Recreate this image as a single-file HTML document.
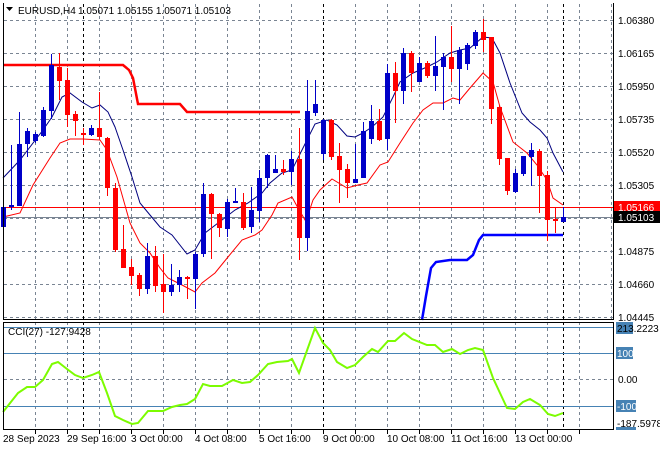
<!DOCTYPE html>
<html><head><meta charset="utf-8"><style>
html,body{margin:0;padding:0;background:#fff;}
svg{display:block;font-family:"Liberation Sans",sans-serif;font-size:10px;}
</style></head><body>
<svg width="660" height="450" viewBox="0 0 660 450" xmlns="http://www.w3.org/2000/svg" shape-rendering="crispEdges">
<rect width="660" height="450" fill="#fff"/>
<g stroke="#7a8593" stroke-width="1" stroke-dasharray="3,3" fill="none">
<path d="M4 20.5H613M4 53.5H613M4 86.5H613M4 119.5H613M4 152.5H613M4 185.5H613M4 218.5H613M4 251.5H613M4 284.5H613M4 317.5H613"/>
<path d="M35.5 4V319M67.5 4V319M99.5 4V319M131.5 4V319M163.5 4V319M195.5 4V319M227.5 4V319M259.5 4V319M291.5 4V319M355.5 4V319M387.5 4V319M419.5 4V319M451.5 4V319M483.5 4V319M515.5 4V319M547.5 4V319M579.5 4V319M611.5 4V319"/>
<path d="M35.5 322V429M67.5 322V429M99.5 322V429M131.5 322V429M163.5 322V429M195.5 322V429M227.5 322V429M259.5 322V429M291.5 322V429M355.5 322V429M387.5 322V429M419.5 322V429M451.5 322V429M483.5 322V429M515.5 322V429M547.5 322V429M579.5 322V429M4 379.5H613"/>
</g>
<g stroke="#000" stroke-dasharray="3,3"><path d="M83.5 4V429M323.5 4V429M563.5 4V429"/></g>
<g stroke="#4682b4"><path d="M4 327.5H613M4 353.5H613M4 406.5H613"/></g>
<path d="M4 207.5H613" stroke="#ff0000"/>
<path d="M4 217.5H613" stroke="#7a8593"/>
<polyline shape-rendering="auto" fill="none" stroke="#ff0000" stroke-width="2.5" points="3,65 123,65 129,70 133,78 138,104 180,104 187,112 300,112"/>
<polyline shape-rendering="auto" fill="none" stroke="#0000ff" stroke-width="2.5" points="422,320 426,296 431,268 436,262 450,260 467,260 473,255 479,240 483,235 563,235"/>
<polyline shape-rendering="auto" fill="none" stroke="#00007f" stroke-width="1" points="3,178 20,160 43,130 52,117 62,97 70,93 82,102 92,108 100,105 108,112 115,127 123,150 132,177 140,203 150,215 160,227 172,235 187,254 195,250 205,233 222,220 235,210 248,203 262,193 270,183 282,173 292,170 302,150 315,124 327,120 337,125 347,136 355,137 363,133 372,127 383,117 393,97 400,82 413,73 427,67 437,62 450,53 460,50 470,48 483,37 492,38 500,53 510,83 522,113 530,122 540,130 547,138 553,153 563,172"/>
<polyline shape-rendering="auto" fill="none" stroke="#ff0000" stroke-width="1" points="3,217 20,213 33,185 50,158 60,143 70,139 83,139 100,140 107,150 117,177 130,223 140,243 150,253 160,268 168,278 182,285 195,292 202,283 215,273 228,257 242,240 255,235 262,230 272,215 278,203 292,197 298,208 305,220 307,218 313,200 320,190 332,179 347,188 358,185 367,183 380,165 388,162 400,143 413,123 423,110 433,103 443,103 453,98 460,100 470,88 483,73 493,82 500,107 513,142 527,153 537,165 547,180 553,198 563,205"/>
<g fill="#0000c8">
<rect x="3" y="197" width="1" height="50"/><rect x="1" y="207" width="5" height="20"/>
<rect x="11" y="145" width="1" height="65"/><rect x="9" y="205" width="5" height="2"/>
<rect x="19" y="112" width="1" height="94"/><rect x="17" y="144" width="5" height="62"/>
<rect x="27" y="128" width="1" height="29"/><rect x="25" y="131" width="5" height="13"/>
<rect x="35" y="132" width="1" height="11"/><rect x="33" y="134" width="5" height="7"/>
<rect x="43" y="107" width="1" height="30"/><rect x="41" y="110" width="5" height="26"/>
<rect x="51" y="54" width="1" height="65"/><rect x="49" y="65" width="5" height="46"/>
<rect x="91" y="125" width="1" height="11"/><rect x="89" y="128" width="5" height="7"/>
<rect x="147" y="243" width="1" height="51"/><rect x="145" y="256" width="5" height="33"/>
<rect x="171" y="264" width="1" height="32"/><rect x="169" y="285" width="5" height="7"/>
<rect x="179" y="270" width="1" height="22"/><rect x="177" y="277" width="5" height="8"/>
<rect x="195" y="252" width="1" height="57"/><rect x="193" y="254" width="5" height="25"/>
<rect x="203" y="183" width="1" height="74"/><rect x="201" y="194" width="5" height="60"/>
<rect x="227" y="199" width="1" height="38"/><rect x="225" y="202" width="5" height="27"/>
<rect x="235" y="188" width="1" height="15"/><rect x="233" y="201" width="5" height="2"/>
<rect x="251" y="187" width="1" height="46"/><rect x="249" y="210" width="5" height="17"/>
<rect x="259" y="170" width="1" height="52"/><rect x="257" y="178" width="5" height="33"/>
<rect x="267" y="154" width="1" height="34"/><rect x="265" y="155" width="5" height="23"/>
<rect x="275" y="155" width="1" height="18"/><rect x="273" y="169" width="5" height="4"/>
<rect x="291" y="151" width="1" height="34"/><rect x="289" y="159" width="5" height="13"/>
<rect x="307" y="80" width="1" height="171"/><rect x="305" y="111" width="5" height="127"/>
<rect x="315" y="80" width="1" height="36"/><rect x="313" y="104" width="5" height="9"/>
<rect x="323" y="119" width="1" height="41"/><rect x="321" y="120" width="5" height="34"/>
<rect x="355" y="144" width="1" height="39"/><rect x="353" y="179" width="5" height="4"/>
<rect x="363" y="122" width="1" height="56"/><rect x="361" y="131" width="5" height="47"/>
<rect x="371" y="105" width="1" height="39"/><rect x="369" y="121" width="5" height="18"/>
<rect x="387" y="64" width="1" height="86"/><rect x="385" y="73" width="5" height="66"/>
<rect x="403" y="48" width="1" height="56"/><rect x="401" y="53" width="5" height="38"/>
<rect x="419" y="57" width="1" height="25"/><rect x="417" y="63" width="5" height="19"/>
<rect x="435" y="36" width="1" height="55"/><rect x="433" y="66" width="5" height="10"/>
<rect x="443" y="53" width="1" height="57"/><rect x="441" y="57" width="5" height="10"/>
<rect x="459" y="47" width="1" height="57"/><rect x="457" y="50" width="5" height="19"/>
<rect x="467" y="43" width="1" height="27"/><rect x="465" y="45" width="5" height="19"/>
<rect x="475" y="30" width="1" height="19"/><rect x="473" y="32" width="5" height="14"/>
<rect x="515" y="169" width="1" height="24"/><rect x="513" y="173" width="5" height="19"/>
<rect x="523" y="156" width="1" height="20"/><rect x="521" y="156" width="5" height="18"/>
<rect x="531" y="143" width="1" height="43"/><rect x="529" y="150" width="5" height="7"/>
<rect x="563" y="207" width="1" height="15"/><rect x="561" y="217" width="5" height="5"/>
</g>
<g fill="#ff0000">
<rect x="59" y="53" width="1" height="47"/><rect x="57" y="67" width="5" height="14"/>
<rect x="67" y="68" width="1" height="59"/><rect x="65" y="80" width="5" height="35"/>
<rect x="75" y="111" width="1" height="25"/><rect x="73" y="114" width="5" height="7"/>
<rect x="83" y="128" width="1" height="17"/><rect x="81" y="133" width="5" height="2"/>
<rect x="99" y="92" width="1" height="48"/><rect x="97" y="128" width="5" height="9"/>
<rect x="107" y="137" width="1" height="59"/><rect x="105" y="138" width="5" height="50"/>
<rect x="115" y="183" width="1" height="69"/><rect x="113" y="188" width="5" height="62"/>
<rect x="123" y="225" width="1" height="43"/><rect x="121" y="249" width="5" height="19"/>
<rect x="131" y="259" width="1" height="26"/><rect x="129" y="267" width="5" height="9"/>
<rect x="139" y="273" width="1" height="23"/><rect x="137" y="275" width="5" height="14"/>
<rect x="155" y="246" width="1" height="46"/><rect x="153" y="256" width="5" height="30"/>
<rect x="163" y="254" width="1" height="59"/><rect x="161" y="284" width="5" height="8"/>
<rect x="187" y="276" width="1" height="23"/><rect x="185" y="277" width="5" height="2"/>
<rect x="211" y="193" width="1" height="66"/><rect x="209" y="194" width="5" height="20"/>
<rect x="219" y="213" width="1" height="24"/><rect x="217" y="214" width="5" height="14"/>
<rect x="243" y="193" width="1" height="37"/><rect x="241" y="202" width="5" height="26"/>
<rect x="283" y="160" width="1" height="15"/><rect x="281" y="169" width="5" height="3"/>
<rect x="299" y="128" width="1" height="132"/><rect x="297" y="159" width="5" height="79"/>
<rect x="331" y="119" width="1" height="41"/><rect x="329" y="120" width="5" height="37"/>
<rect x="339" y="143" width="1" height="60"/><rect x="337" y="156" width="5" height="14"/>
<rect x="347" y="164" width="1" height="34"/><rect x="345" y="169" width="5" height="14"/>
<rect x="379" y="109" width="1" height="32"/><rect x="377" y="121" width="5" height="19"/>
<rect x="395" y="62" width="1" height="61"/><rect x="393" y="73" width="5" height="18"/>
<rect x="411" y="51" width="1" height="41"/><rect x="409" y="53" width="5" height="20"/>
<rect x="427" y="61" width="1" height="17"/><rect x="425" y="63" width="5" height="13"/>
<rect x="451" y="26" width="1" height="56"/><rect x="449" y="57" width="5" height="12"/>
<rect x="483" y="19" width="1" height="33"/><rect x="481" y="32" width="5" height="8"/>
<rect x="491" y="37" width="1" height="87"/><rect x="489" y="37" width="5" height="72"/>
<rect x="499" y="105" width="1" height="60"/><rect x="497" y="107" width="5" height="52"/>
<rect x="507" y="158" width="1" height="37"/><rect x="505" y="158" width="5" height="33"/>
<rect x="539" y="149" width="1" height="64"/><rect x="537" y="151" width="5" height="25"/>
<rect x="547" y="171" width="1" height="70"/><rect x="545" y="175" width="5" height="45"/>
<rect x="555" y="207" width="1" height="26"/><rect x="553" y="219" width="5" height="2"/>
</g>
<polyline shape-rendering="auto" fill="none" stroke="#7cfc00" stroke-width="2" points="3,412 18,393 27,387 35,387 43,380 52,364 58,362 67,369 75,375 83,378 92,375 99,372 107,393 115,416 123,420 132,424 138,423 148,411 163,411 172,407 180,405 187,404 195,399 203,384 210,386 222,386 233,380 242,383 250,382 258,375 268,364 277,362 288,361 292,359 299,373 315,328 323,343 330,350 337,362 347,368 355,365 363,357 372,349 378,352 388,341 395,341 404,333 412,339 427,345 435,345 443,352 452,349 460,354 468,350 475,348 483,350 493,378 507,408 515,409 523,402 530,399 540,405 548,414 555,416 563,413"/>
<g stroke="#000" fill="none">
<path d="M3.5 3V319.5H613.5V3"/>
<path d="M3.5 322.5H613.5V429.5H3.5Z"/>
</g>
<g stroke="#000"><path d="M35.5 430V434M67.5 430V434M99.5 430V434M131.5 430V434M163.5 430V434M195.5 430V434M227.5 430V434M259.5 430V434M291.5 430V434M323.5 430V434M355.5 430V434M387.5 430V434M419.5 430V434M451.5 430V434M483.5 430V434M515.5 430V434M547.5 430V434M579.5 430V434"/></g>
<path d="M6 7H13L9.5 11Z" fill="#000" shape-rendering="auto"/>
<text x="18" y="14" fill="#000">EURUSD,H4</text>
<text x="78" y="14" fill="#000">1.05071 1.05155 1.05071 1.05103</text>
<text x="8" y="335" fill="#000">CCI(27) -127.9428</text>
<g fill="#000">
<text x="618" y="24">1.06380</text>
<text x="618" y="57">1.06165</text>
<text x="618" y="90">1.05950</text>
<text x="618" y="123">1.05735</text>
<text x="618" y="156">1.05520</text>
<text x="618" y="189">1.05305</text>
<text x="618" y="255">1.04875</text>
<text x="618" y="288">1.04660</text>
<text x="618" y="321">1.04445</text>
</g>
<rect x="614" y="201" width="46" height="12" fill="#ff0000"/>
<text x="618" y="211" fill="#fff">1.05166</text>
<rect x="614" y="211" width="46" height="12" fill="#000"/>
<text x="618" y="221" fill="#fff">1.05103</text>
<rect x="616" y="322" width="17" height="12" fill="#4682b4"/>
<text x="617" y="332" fill="#000">213.2223</text>
<rect x="616" y="347" width="17" height="12" fill="#4682b4"/>
<text x="617" y="357" fill="#fff">100</text>
<text x="618" y="383" fill="#000">0.00</text>
<rect x="616" y="400" width="20" height="12" fill="#4682b4"/>
<text x="617" y="410" fill="#fff">-100</text>
<rect x="616" y="427" width="20" height="3" fill="#4682b4"/>
<text x="617" y="427" fill="#000">-187.5978</text>
<g fill="#000">
<text x="3" y="442">28 Sep 2023</text>
<text x="67" y="442">29 Sep 16:00</text>
<text x="131" y="442">3 Oct 00:00</text>
<text x="195" y="442">4 Oct 08:00</text>
<text x="259" y="442">5 Oct 16:00</text>
<text x="323" y="442">9 Oct 00:00</text>
<text x="387" y="442">10 Oct 08:00</text>
<text x="451" y="442">11 Oct 16:00</text>
<text x="515" y="442">13 Oct 00:00</text>
</g>
</svg>
</body></html>
